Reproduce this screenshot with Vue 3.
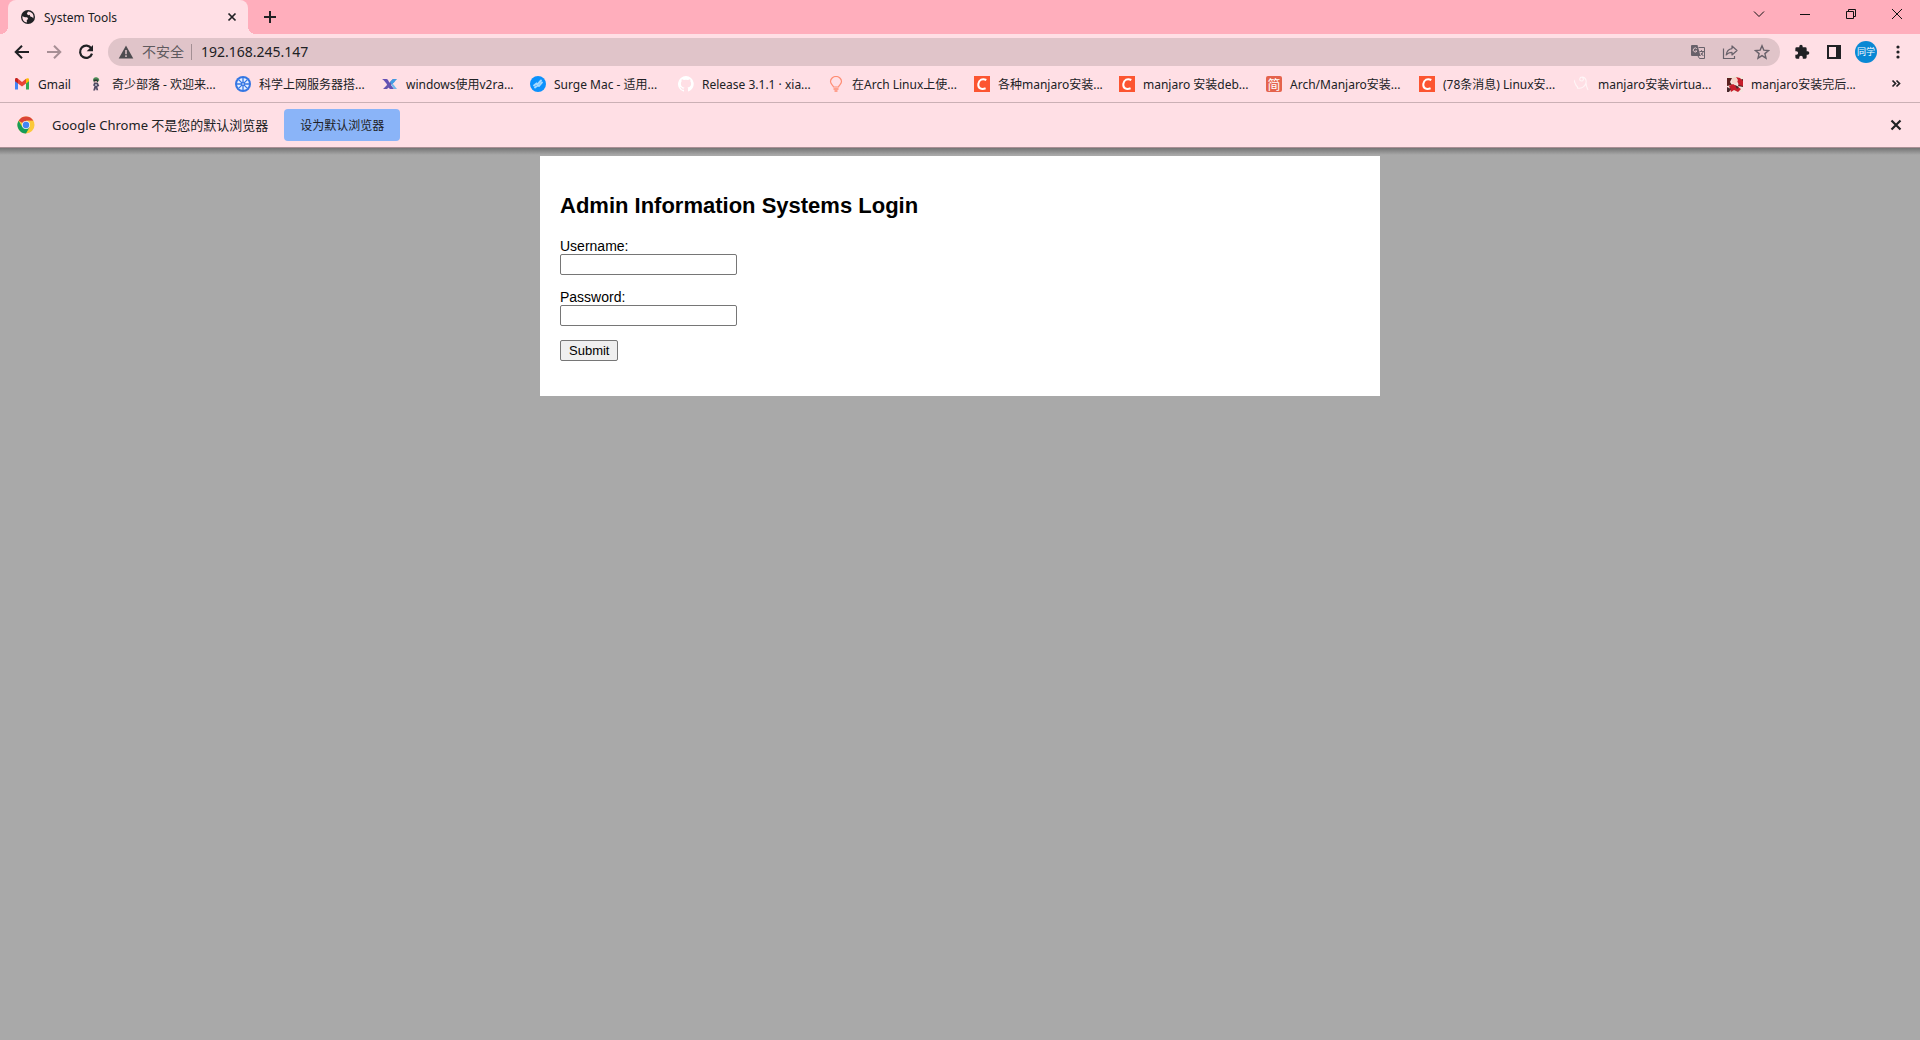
<script setup>
import { ref } from 'vue'

const address = ref('192.168.245.147')
const username = ref('')
const password = ref('')

const bookmarks = [
  { icon: 'gmail', title: 'Gmail' },
  { icon: 'figure', title: '奇少部落 - 欢迎来...' },
  { icon: 'wheel', title: '科学上网服务器搭...' },
  { icon: 'ribbon', title: 'windows使用v2ra...' },
  { icon: 'surge', title: 'Surge Mac - 适用...' },
  { icon: 'github', title: 'Release 3.1.1 · xia...' },
  { icon: 'bulb', title: '在Arch Linux上使...' },
  { icon: 'csdn', title: '各种manjaro安装...' },
  { icon: 'csdn', title: 'manjaro 安装deb...' },
  { icon: 'jian', title: 'Arch/Manjaro安装...' },
  { icon: 'csdn', title: '(78条消息) Linux安...' },
  { icon: 'swirl', title: 'manjaro安装virtua...' },
  { icon: 'anime', title: 'manjaro安装完后...' },
]
</script>

<template>
  <div class="browser">
    <header>
      <div class="tab-strip">
        <div class="tab">
          <svg class="icon16" viewBox="0 0 16 16">
            <circle cx="8" cy="8" r="7" fill="#202124" />
            <path d="M2.3 7.2 5 8.2l2.200.1 1 1.600-1.400 1.200.1 2.500C4 13.200 2.200 11 2.300 7.200ZM8 2.500 6.800 4.800l1.400 1.400 1.500-.4.600 1.800 2.100.6.800 1.300c1.300-3.200-.9-6.800-5.200-7Z" fill="#ffdfe5" />
          </svg>
          <span class="tab-title">System Tools</span>
          <button class="tab-close" aria-label="Close tab">
            <svg class="icon16" viewBox="0 0 16 16"><path d="m4.500 4.500 7 7m0-7-7 7" stroke="#202124" stroke-width="1.700" /></svg>
          </button>
        </div>
        <button class="new-tab" aria-label="New tab">
          <svg class="icon16" viewBox="0 0 16 16"><path d="M8 2v12M2 8h12" stroke="#202124" stroke-width="2" /></svg>
        </button>
        <div class="window-controls">
          <button aria-label="Search tabs"><svg class="icon16" viewBox="0 0 16 16" fill="none" stroke="#111"><path d="m3 5.500 5 5 5-5" /></svg></button>
          <button aria-label="Minimize"><svg class="icon16" viewBox="0 0 16 16" fill="none" stroke="#111"><path d="M3 8.500h10" /></svg></button>
          <button aria-label="Restore"><svg class="icon16" viewBox="0 0 16 16" fill="none" stroke="#111"><path d="M3.500 5.500h7v7h-7zM5.500 5.500v-2h7v7h-2" /></svg></button>
          <button aria-label="Close"><svg class="icon16" viewBox="0 0 16 16" fill="none" stroke="#111"><path d="m3 3 10 10M13 3 3 13" /></svg></button>
        </div>
      </div>

      <div class="toolbar">
        <button aria-label="Back"><svg class="icon16" viewBox="0 0 16 16" fill="none" stroke="#202124" stroke-width="2"><path d="M15 8H2.500M8 1.700 1.700 8 8 14.300" /></svg></button>
        <button aria-label="Forward"><svg class="icon16" viewBox="0 0 16 16" fill="none" stroke="#a78f95" stroke-width="2"><path d="M1 8h12.500M8 1.700 14.300 8 8 14.300" /></svg></button>
        <button aria-label="Reload"><svg class="icon16" viewBox="0 0 16 16"><path d="M13.300 4.400A6.100 6.100 0 1 0 14 9.600" fill="none" stroke="#202124" stroke-width="2.200" /><path d="M15 1v6.300H8.700Z" fill="#202124" /></svg></button>
        <div class="omnibox">
          <svg class="icon16" viewBox="0 0 16 16"><path d="M8 1.500 15.300 14.500H.7Z" fill="#4d4c50" /><path d="M8 6v4.200M8 11.300v1.700" stroke="#e0c4c9" stroke-width="1.500" /></svg>
          <span class="insecure">不安全</span>
          <input v-model="address" class="address" aria-label="Address" />
          <button aria-label="Translate">
            <svg class="icon16" viewBox="0 0 16 16">
              <path d="M8.500 3.500h6v11H9.500L8 12" fill="none" stroke="#68616a" />
              <path d="M9.500 7.500H14M11.500 6.200v1.300M13 8c-.5 1.700-1.300 2.500-2.500 3.400M11 9l2.300 3" fill="none" stroke="#68616a" />
              <path d="M2 1h5.500L10.500 12H2a1 1 0 0 1-1-1V2a1 1 0 0 1 1-1Z" fill="#68616a" />
              <path d="M6.800 4.700a2 2 0 1 0 .2 2.300H5.200" fill="none" stroke="#e0c4c9" />
            </svg>
          </button>
          <button aria-label="Share"><svg class="icon16" viewBox="0 0 16 16" fill="none" stroke="#68616a" stroke-width="1.200"><path d="M1.500 4.500v10h11V12" /><path d="M10 2v2.600C6.500 5 4.700 7.200 4.200 11 5.600 9.200 7.200 8.300 10 8.300V11l5-4.500Z" stroke-linejoin="round" /></svg></button>
          <button aria-label="Bookmark"><svg class="icon16" viewBox="0 0 16 16" fill="none" stroke="#68616a" stroke-width="1.400"><path d="m8 1.800 1.800 4.300 4.700.4-3.600 3.100 1.100 4.600-4-2.500-4 2.500 1.100-4.600-3.600-3.100 4.700-.4Z" /></svg></button>
        </div>
        <button aria-label="Extensions"><svg class="icon16" viewBox="0 0 24 24"><path d="M20.500 11H19V7a2 2 0 0 0-2-2h-4V3.500a2.500 2.500 0 0 0-5 0V5H4a2 2 0 0 0-2 2v3.800h1.500a2.700 2.700 0 0 1 0 5.400H2V20a2 2 0 0 0 2 2h3.800v-1.500a2.700 2.700 0 0 1 5.400 0V22H17a2 2 0 0 0 2-2v-4h1.500a2.500 2.500 0 0 0 0-5Z" fill="#202124" /></svg></button>
        <button aria-label="Side panel"><svg class="icon16" viewBox="0 0 16 16"><path d="M1 1h14v14H1ZM3 3v10h7V3Z" fill="#202124" fill-rule="evenodd" /></svg></button>
        <button aria-label="Profile"><span class="avatar">同学</span></button>
        <button aria-label="Menu"><svg class="icon16" viewBox="0 0 16 16" fill="#202124"><circle cx="8" cy="3" r="1.600" /><circle cx="8" cy="8" r="1.600" /><circle cx="8" cy="13" r="1.600" /></svg></button>
      </div>

      <nav class="bookmarks">
        <a v-for="(mark, i) in bookmarks" :key="i" href="#" class="bookmark">
          <svg class="icon16" viewBox="0 0 16 16">
            <g v-if="mark.icon === 'gmail'">
              <path d="M1 4v9.500h3V7Z" fill="#4285f4" /><path d="M12 7v6.500h3V4Z" fill="#34a853" />
              <path d="M1 5V3.500C1 2 2.700 1.700 3.700 2.500L4 2.800v4.600L1 5.200Z" fill="#c5221f" />
              <path d="m4 2.800 4 3.100 4-3.100v4.600l-4 3-4-3Z" fill="#ea4335" />
              <path d="M12 2.800c1-.9 3-.9 3 .9v1.500l-3 2.200Z" fill="#fbbc04" />
            </g>
            <g v-else-if="mark.icon === 'figure'">
              <path d="M5 4.500C5 1.500 7 1 8.500 1.300c2 .3 3 1.700 2.700 3.500L9.500 6 6 5.700Z" fill="#4c8a55" />
              <path d="M5.800 3.500h4v3h-4Z" fill="#26352f" /><path d="M6.500 5h2.500v1.500H6.500Z" fill="#c9a5a8" />
              <path d="M6 7h4l1.300 3-2 .7.900 3.600H8.400L8 12l-1 2.500H5.200L6.500 10 5 9.500Z" fill="#4f4963" />
              <path d="M7 8h2v2H7Z" fill="#a6a6b5" />
            </g>
            <g v-else-if="mark.icon === 'wheel'">
              <circle cx="8" cy="8" r="8" fill="#3476e3" />
              <circle cx="8" cy="8" r="6" fill="#e8f0ff" />
              <path d="M8 1.800v12.400M1.800 8h12.400M3.600 3.600l8.800 8.800M12.400 3.600l-8.800 8.800" stroke="#3476e3" stroke-width="1.300" />
              <circle cx="8" cy="8" r="1.800" fill="#3476e3" /><circle cx="8" cy="8" r=".8" fill="#fff" />
            </g>
            <g v-else-if="mark.icon === 'ribbon'">
              <path d="M0 3h4.500c1.700 0 2.500 3.500 4 5.500L12 13H8.500C6.500 13 5.500 9 4 7 3 5.500 1.500 4 0 3Z" fill="#6350b5" />
              <path d="M14.500 3H11L1 13h4l3.800-3.700C11 7.500 12.500 5 14.500 3Z" fill="#6554ae" />
              <path d="M15 3H11L8 6l1.500 2.500C11.500 7.500 13 5 15 3Z" fill="#409ce4" /><path d="M9 8.500 11 8l4 5H12Z" fill="#73b8ec" />
            </g>
            <g v-else-if="mark.icon === 'surge'">
              <circle cx="8" cy="8" r="8" fill="#0b91fc" />
              <path d="m4 9.500 2.500-2 1 1 3.500-4M5 11.500l2.500-2 1.500.5 3-3.500" fill="none" stroke="#a5d9ff" stroke-width="1.900" stroke-linecap="round" />
            </g>
            <path v-else-if="mark.icon === 'github'" d="M8 0a8 8 0 0 0-2.500 15.600c.4.100.5-.2.500-.4v-1.500c-2.200.5-2.700-1-2.700-1-.4-.9-.9-1.200-.9-1.200-.7-.5.100-.5.100-.5.800.1 1.200.8 1.200.8.700 1.200 1.900.9 2.300.7.100-.5.300-.9.500-1.100-1.800-.2-3.600-.9-3.600-4 0-.9.300-1.600.8-2.100-.1-.2-.4-1 .1-2.100 0 0 .7-.2 2.200.8a7.500 7.500 0 0 1 4 0c1.500-1 2.200-.8 2.200-.8.400 1.100.2 1.900.1 2.100.5.600.8 1.300.8 2.100 0 3.100-1.900 3.700-3.600 3.900.3.300.5.800.5 1.500v2.300c0 .2.100.5.500.4A8 8 0 0 0 8 0Z" fill="#fff" />
            <g v-else-if="mark.icon === 'bulb'" fill="none" stroke="#ff8c72">
              <path d="M5.500 11C5 9 2.500 8 2.500 5.500a5.500 5 0 0 1 11 0C13.500 8 11 9 10.500 11Z" stroke-width="1.200" />
              <path d="M5.500 13h5M6.500 15h3" stroke-width="1.700" />
            </g>
            <g v-else-if="mark.icon === 'csdn'">
              <path d="M0 0h16v16H0Z" fill="#fc5531" />
              <path d="M12.300 4C8.500 2 5 3.700 4.300 8c-.4 4.300 3 6 7.300 4.300" fill="none" stroke="#fff" stroke-width="2" />
            </g>
            <g v-else-if="mark.icon === 'jian'">
              <rect width="16" height="16" rx="2" fill="#e5634c" />
              <text x="8" y="13" text-anchor="middle" class="jian">简</text>
            </g>
            <g v-else-if="mark.icon === 'swirl'" fill="none" stroke="#fff5f6" stroke-width="1.100">
              <path d="M0 4c1 4 2 6 4 7.500M3 12c4 1 8-1 9-5 .7-3-1-6-3.500-6C5 1 5 5 7.500 5c2 0 2.500-2 1-3.500M12 6c-.2 3 .5 5 2 8" />
            </g>
            <g v-else>
              <path d="M0 0h16v16H0Z" fill="#f5e5e0" />
              <path d="M0 2h5L3 6l2 3-5 1ZM12 4l4-1v8l-5-1 1-3Z" fill="#5b211f" />
              <path d="m9 1 4 1 3 3v5l-4-1-2-4ZM2 10l4-2 5 3 3 2-3 3-4-2-3 2Z" fill="#c71e2b" />
              <path d="m5 2 4-1 2 3-2 4-4-1Z" fill="#f5d3c9" /><path d="m0 11 4 2-2 3H0ZM8 9l4 2-2 2Z" fill="#47282b" />
            </g>
          </svg>
          <span>{{ mark.title }}</span>
        </a>
        <button class="overflow" aria-label="More bookmarks"><svg class="icon16" viewBox="0 0 16 16" fill="none" stroke="#202124" stroke-width="1.700"><path d="m4.500 4.500 3 3-3 3M8.500 4.500l3 3-3 3" /></svg></button>
      </nav>

      <div class="infobar">
        <svg class="chrome-logo" viewBox="0 0 18 18">
          <circle cx="9" cy="9" r="8.500" fill="#fbc93a" />
          <path d="M9 9 1.600 4.700A8.500 8.500 0 0 1 16.400 4.700H9Z" fill="#dc4437" />
          <path d="M1.600 4.700A8.500 8.500 0 0 0 9 17.500l3.700-6.400L9 9 5.300 11.100Z" fill="#169d58" />
          <path d="M9 4.700h7.400L12.700 11 9 17.500l3.700-6.400Z" fill="#fbc93a" />
          <circle cx="9" cy="9" r="4" fill="#f4f0f2" /><circle cx="9" cy="9" r="3.200" fill="#4285f4" />
        </svg>
        <span class="info-text">Google Chrome 不是您的默认浏览器</span>
        <button class="set-default">设为默认浏览器</button>
        <button class="info-close" aria-label="Dismiss"><svg class="icon16" viewBox="0 0 16 16"><path d="m3.500 3.500 9 9m0-9-9 9" stroke="#202124" stroke-width="2.200" /></svg></button>
      </div>
    </header>

    <main>
      <form class="card" @submit.prevent>
        <h2>Admin Information Systems Login</h2>
        <div class="field">
          <label for="username">Username:</label>
          <input id="username" v-model="username" type="text" />
        </div>
        <div class="field">
          <label for="password">Password:</label>
          <input id="password" v-model="password" type="password" />
        </div>
        <button class="submit" type="submit">Submit</button>
      </form>
    </main>
  </div>
</template>

<style>
body {
  margin: 0;
}
</style>

<style scoped>
.browser {
  display: flex;
  flex-direction: column;
  min-height: 100vh;
  background: #a9a9a9;
  color: #202124;
  font-family: "Noto Sans", "Noto Sans CJK SC", sans-serif;
  font-size: 12px;
}
header {
  background: #ffdfe5;
}
header button {
  display: flex;
  align-items: center;
  justify-content: center;
  flex: none;
  padding: 0;
  border: 0;
  background: none;
  color: inherit;
  font: inherit;
}
.icon16 {
  flex: none;
  width: 16px;
  height: 16px;
}
.tab-strip {
  display: flex;
  height: 34px;
  padding-left: 8px;
  background: #ffaebc;
}
.tab {
  position: relative;
  display: flex;
  align-items: center;
  box-sizing: border-box;
  width: 240px;
  padding: 0 8px 0 12px;
  border-radius: 8px 8px 0 0;
  background: #ffdfe5;
}
.tab::before,
.tab::after {
  content: "";
  position: absolute;
  bottom: 0;
  width: 8px;
  height: 8px;
}
.tab::before {
  right: 100%;
  background: radial-gradient(circle at 0 0, #ffaebc 8px, #ffdfe5 8px);
}
.tab::after {
  left: 100%;
  background: radial-gradient(circle at 100% 0, #ffaebc 8px, #ffdfe5 8px);
}
.tab-title {
  flex: 1;
  margin-left: 8px;
}
.new-tab {
  width: 44px;
}
.window-controls {
  display: flex;
  height: 28px;
  margin-left: auto;
}
.window-controls button {
  width: 46px;
}
.toolbar {
  display: flex;
  align-items: center;
  height: 36px;
  padding: 0 6px;
}
.toolbar button {
  width: 32px;
  height: 28px;
}
.omnibox {
  display: flex;
  flex: 1;
  align-items: center;
  height: 28px;
  margin: 0 6px;
  padding: 0 2px 0 10px;
  box-sizing: border-box;
  border-radius: 14px;
  background: #e0c4c9;
  font-size: 14px;
}
.insecure {
  margin-left: 8px;
  padding-right: 7px;
  border-right: 1px solid #a38f94;
  color: #5f5a5e;
  line-height: 16px;
}
.address {
  flex: 1;
  min-width: 0;
  margin-left: 9px;
  padding: 0 0 2px;
  border: 0;
  outline: 0;
  background: none;
  color: inherit;
  font: inherit;
}
.avatar {
  width: 22px;
  border-radius: 50%;
  background: #0a88d4;
  color: #fff;
  font-size: 9px;
  line-height: 22px;
  text-align: center;
}
.bookmarks {
  display: grid;
  grid-template-columns: 74px repeat(2, 147px) repeat(2, 148px) 150px 146px 145px 147px 153px 155px 153px 146px 1fr;
  align-items: center;
  height: 28px;
  padding: 0 16px 4px 14px;
  border-bottom: 1px solid #cbb0b5;
}
.bookmark {
  display: flex;
  align-items: center;
  gap: 8px;
  color: inherit;
  text-decoration: none;
  white-space: nowrap;
}
.jian {
  fill: #fff;
  font-size: 13px;
}
.overflow {
  justify-self: end;
}
.infobar {
  display: flex;
  align-items: center;
  height: 44px;
  padding: 0 16px 0 17px;
  border-bottom: 1px solid #aa8f95;
}
.chrome-logo {
  width: 18px;
  height: 18px;
}
.info-text {
  margin-left: 17px;
  padding-bottom: 2px;
  font-size: 13px;
}
.infobar .set-default {
  height: 32px;
  margin-left: 16px;
  padding: 0 16px;
  border-radius: 4px;
  background: #8ab4f8;
}
.infobar .info-close {
  margin-left: auto;
}
main {
  flex: 1;
  padding: 8px;
  background: linear-gradient(#747474, #a9a9a9 7px);
  color: #000;
  font-family: "Liberation Sans", Arial, sans-serif;
  font-size: 14px;
  line-height: 16px;
}
.card {
  max-width: 800px;
  margin: 0 auto;
  padding: 20px 20px 35px;
  background: #fff;
}
h2 {
  margin: 0;
  padding: 17px 0 19px;
  font-size: 22px;
  line-height: 26px;
}
.field {
  display: flex;
  flex-direction: column;
  align-items: flex-start;
  margin-bottom: 14px;
}
.field input {
  box-sizing: border-box;
  width: 177px;
  height: 21px;
  padding: 1px 2px;
  border: 1px solid #767676;
  border-radius: 2px;
  background: #fff;
  font: inherit;
}
.submit {
  height: 21px;
  padding: 0 8px;
  border: 1px solid #767676;
  border-radius: 2px;
  background: #efefef;
  color: #000;
  font-family: inherit;
  font-size: 13px;
}
</style>
